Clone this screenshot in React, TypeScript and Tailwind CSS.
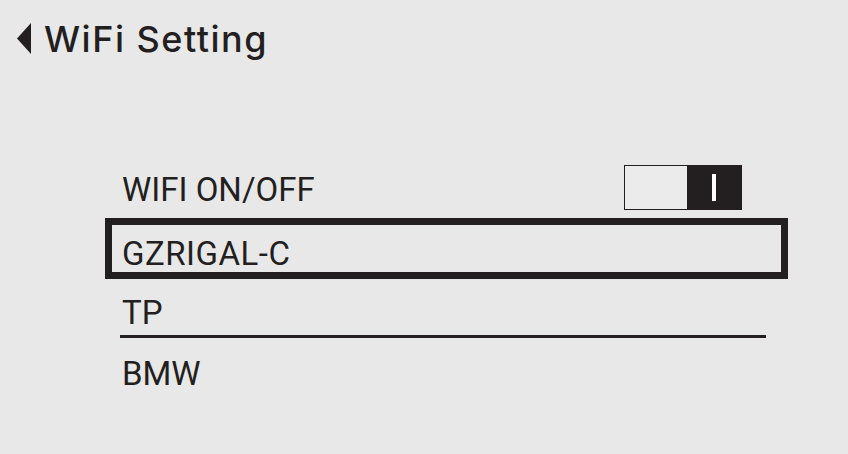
export default function App() {
  return (
    <div className="w-[848px] h-[454px] bg-[#e8e8e8] text-[#231f20] overflow-hidden" style={{ fontFamily: "Roboto, 'Liberation Sans', sans-serif" }}>
      {/* Header */}
      <div className="flex items-center h-[60px] pt-[17px] pl-[17px]">
        <svg width="14" height="31" viewBox="0 0 14 31" className="shrink-0">
          <polygon points="0,15.5 14,0 14,31" fill="#231f20" />
        </svg>
        <h1 className="ml-[13px] text-[36px] font-medium leading-none tracking-[1.5px]" style={{ fontFamily: "Inter, 'Liberation Sans', sans-serif" }}>
          WiFi Setting
        </h1>
      </div>

      {/* List */}
      <div className="ml-[105px] mt-[97px] w-[683px] text-[33px] leading-none">
        <div className="flex h-[61px] items-center justify-between pl-[17px] pr-[46px]">
          <span className="mt-[4px]">WIFI ON/OFF</span>
          <div className="flex h-[45px] w-[118px] border border-[#231f20]">
            <div className="flex-1 bg-[#ebebeb]" />
            <div className="flex w-[54px] items-center justify-center bg-[#231f20]">
              <div className="h-[27px] w-[4px] bg-white" />
            </div>
          </div>
        </div>
        <div className="flex h-[61px] items-center border-[7px] border-[#231f20] pl-[10px]">
          <span className="mt-[10px] tracking-[0.5px]">GZRIGAL-C</span>
        </div>
        <div className="flex h-[56px] items-center pl-[17px]">
          <span className="mt-[11px]">TP</span>
        </div>
        <div className="ml-[15px] h-[3px] w-[646px] bg-[#231f20]" />
        <div className="flex h-[61px] items-center pl-[17px]">
          <span className="mt-[10px]">BMW</span>
        </div>
      </div>
    </div>
  );
}
